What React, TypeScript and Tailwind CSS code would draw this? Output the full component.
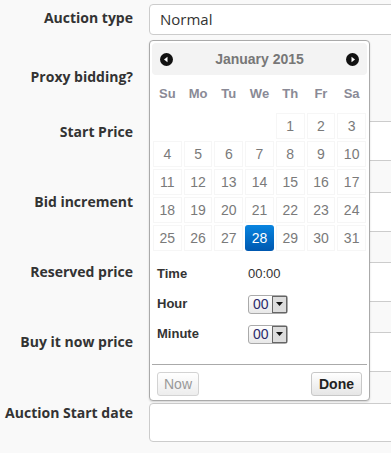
import React from 'react';

// Auction form with the date-time picker popup opened over it

const LABEL_FONT = { fontFamily: '"Open Sans", "Liberation Sans", sans-serif' };
const PICKER_FONT = { fontFamily: '"Liberation Sans", Arial, sans-serif' };

const DAY_NAMES = ['Su', 'Mo', 'Tu', 'We', 'Th', 'Fr', 'Sa'];

// January 2015 starts on a Thursday
const CELLS: (number | null)[] = [
  null, null, null, null,
  ...Array.from({ length: 31 }, (_, i) => i + 1),
];

function Label({ children, className = '' }: { children: React.ReactNode; className?: string }) {
  return (
    <div
      className={`w-[133px] shrink-0 text-right text-[14px] font-bold leading-[20px] text-[#333] ${className}`}
      style={LABEL_FONT}
    >
      {children}
    </div>
  );
}

function Field({ className = '', children }: { className?: string; children?: React.ReactNode }) {
  return (
    <div
      className={`ml-4 w-[280px] shrink-0 rounded-[4px] border border-[#ccc] bg-white ${className}`}
      style={LABEL_FONT}
    >
      {children}
    </div>
  );
}

function NavIcon({ dir }: { dir: 'prev' | 'next' }) {
  return (
    <svg width="13" height="13" viewBox="0 0 13 13">
      <circle cx="6.5" cy="6.5" r="6.5" fill="#111" />
      {dir === 'prev' ? (
        <polygon points="4,6.5 7.5,3.8 7.5,9.2" fill="#fff" />
      ) : (
        <polygon points="9,6.5 5.5,3.8 5.5,9.2" fill="#fff" />
      )}
    </svg>
  );
}

function MiniSelect() {
  return (
    <div className="flex h-[19px] w-[40px] items-stretch rounded-[3px] border border-[#aaa] bg-gradient-to-b from-white to-[#e8e8e8]">
      <span className="flex flex-1 items-center pl-[4px] text-[14px] leading-none text-[#2a2a6a]">00</span>
      <span className="flex w-[15px] items-center justify-center border border-[#666] bg-[#ddd]">
        <svg width="7" height="4" viewBox="0 0 7 4">
          <polygon points="0,0 7,0 3.5,4" fill="#111" />
        </svg>
      </span>
    </div>
  );
}

function DatePicker() {
  return (
    <div
      className="absolute left-[149px] top-[40px] flex h-[361px] w-[221px] flex-col rounded-[4px] border border-[#aaa] bg-white p-[2px] shadow-[0_1px_2px_rgba(0,0,0,0.15)]"
      style={PICKER_FONT}
    >
      {/* header */}
      <div className="flex h-[32px] items-center justify-between rounded-[4px] bg-[#f3f3f3] px-[8px]">
        <NavIcon dir="prev" />
        <span className="text-[14px] font-bold text-[#777]">January 2015</span>
        <NavIcon dir="next" />
      </div>

      {/* day names */}
      <div className="grid h-[38px] grid-cols-7 items-center gap-x-[2px] px-[1px]">
        {DAY_NAMES.map((d) => (
          <span key={d} className="text-center text-[13px] font-bold text-[#8a8a96]">
            {d}
          </span>
        ))}
      </div>

      {/* days */}
      <div className="grid grid-cols-7 gap-[2px] px-[1px]">
        {CELLS.map((day, i) =>
          day === null ? (
            <span key={`e${i}`} className="h-[26px]" />
          ) : day === 28 ? (
            <span
              key={day}
              className="flex h-[26px] items-center justify-center rounded-[3px] bg-gradient-to-b from-[#0a85e0] to-[#0058b0] text-[14px] text-white"
            >
              {day}
            </span>
          ) : (
            <span
              key={day}
              className="flex h-[26px] items-center justify-center border border-[#f6f6f6] bg-white text-[14px] text-[#7a7a7a]"
            >
              {day}
            </span>
          ),
        )}
      </div>

      {/* time */}
      <div className="mt-[8px] flex flex-col px-[5px] text-[13px] text-[#333]">
        <div className="flex h-[30px] items-center">
          <span className="w-[91px] font-bold">Time</span>
          <span>00:00</span>
        </div>
        <div className="flex h-[30px] items-center">
          <span className="w-[91px] font-bold">Hour</span>
          <MiniSelect />
        </div>
        <div className="flex h-[30px] items-center">
          <span className="w-[91px] font-bold">Minute</span>
          <MiniSelect />
        </div>
      </div>

      {/* buttons */}
      <div className="mt-[15px] flex items-center justify-between border-t border-[#aaa] px-[5px] pt-[7px]">
        <button className="h-[24px] rounded-[3px] border border-[#d3d3d3] bg-gradient-to-b from-white to-[#ededed] px-[6px] text-[14px] text-[#999]">
          Now
        </button>
        <button className="h-[24px] rounded-[3px] border border-[#c8c8c8] bg-gradient-to-b from-white to-[#e6e6e6] px-[7px] text-[14px] font-bold text-[#222]">
          Done
        </button>
      </div>
    </div>
  );
}

export default function App() {
  return (
    <div className="relative h-[453px] w-[391px] overflow-hidden bg-[#f9f9f9]">
      <div className="flex flex-col">
        <div className="flex h-[39px] items-start pt-[4px]">
          <Label className="mt-[4px]">Auction type</Label>
          <Field className="flex h-[31px] items-center px-[10px] text-[15px] text-[#333]">Normal</Field>
        </div>

        <div className="flex h-[82px] items-start pt-[28px]">
          <Label>Proxy bidding?</Label>
        </div>

        <div className="flex h-[71px] items-start">
          <Label className="mt-[1px]">Start Price</Label>
          <Field className="h-[40px]" />
        </div>

        <div className="flex h-[70px] items-start">
          <Label>Bid increment</Label>
          <Field className="h-[40px]" />
        </div>

        <div className="flex h-[70px] items-start">
          <Label>Reserved price</Label>
          <Field className="h-[40px]" />
        </div>

        <div className="flex h-[71px] items-start">
          <Label>Buy it now price</Label>
          <Field className="h-[40px]" />
        </div>

        <div className="flex h-[50px] items-start">
          <Label>Auction Start date</Label>
          <Field className="h-[39px]" />
        </div>
      </div>

      <DatePicker />
    </div>
  );
}
